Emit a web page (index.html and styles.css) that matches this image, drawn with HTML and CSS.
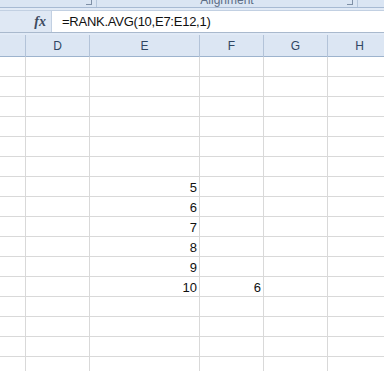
FILE: index.html
```html
<!DOCTYPE html>
<html>

<head>
    <title>RANK.AVG</title>
    <link rel="stylesheet" href="styles.css">
</head>

<body>
    <div class="ribbon">
        <div class="group group-left"><span class="launcher"></span></div>
        <div class="group group-mid"><span class="group-label">Alignment</span><span class="launcher"></span></div>
        <div class="group group-right"></div>
    </div>
    <div class="band"></div>

    <div class="fbar">
        <div class="fx-area"><span class="fx">fx</span></div>
        <div class="formula">=RANK.AVG(10,E7:E12,1)</div>
    </div>
    <div class="band"></div>

    <div class="sheet">
        <div class="cols">
            <div class="ch"></div>
            <div class="ch">D</div>
            <div class="ch">E</div>
            <div class="ch">F</div>
            <div class="ch">G</div>
            <div class="ch">H</div>
        </div>

        <div class="row"><div></div><div></div><div></div><div></div><div></div><div></div></div>
        <div class="row"><div></div><div></div><div></div><div></div><div></div><div></div></div>
        <div class="row"><div></div><div></div><div></div><div></div><div></div><div></div></div>
        <div class="row"><div></div><div></div><div></div><div></div><div></div><div></div></div>
        <div class="row"><div></div><div></div><div></div><div></div><div></div><div></div></div>
        <div class="row"><div></div><div></div><div></div><div></div><div></div><div></div></div>
        <div class="row"><div></div><div></div><div>5</div><div></div><div></div><div></div></div>
        <div class="row"><div></div><div></div><div>6</div><div></div><div></div><div></div></div>
        <div class="row"><div></div><div></div><div>7</div><div></div><div></div><div></div></div>
        <div class="row"><div></div><div></div><div>8</div><div></div><div></div><div></div></div>
        <div class="row"><div></div><div></div><div>9</div><div></div><div></div><div></div></div>
        <div class="row"><div></div><div></div><div>10</div><div>6</div><div></div><div></div></div>
        <div class="row"><div></div><div></div><div></div><div></div><div></div><div></div></div>
        <div class="row"><div></div><div></div><div></div><div></div><div></div><div></div></div>
        <div class="row"><div></div><div></div><div></div><div></div><div></div><div></div></div>
        <div class="row"><div></div><div></div><div></div><div></div><div></div><div></div></div>
    </div>
</body>

</html>
```

FILE: styles.css
```css
body {
    margin: 0;
    background-color: #fff;
    font-family: "Liberation Sans", Arial, sans-serif;
    overflow: hidden;
    width: 384px;
    height: 371px;
}

/* ribbon strip, cut off at the top */
.ribbon {
    display: flex;
    height: 7px;
    background-color: #dae5f3;
    border-bottom: 1px solid #a7bad3;
    overflow: hidden;
}

.group {
    position: relative;
    height: 7px;
}

.group-left {
    width: 96px;
    border-right: 1px solid #b6c7dc;
}

.group-mid {
    width: 260px;
    border-right: 1px solid #b6c7dc;
    text-align: center;
}

.group-right {
    flex: 1;
}

.group-label {
    display: block;
    font-size: 12px;
    line-height: 12px;
    margin-top: -6px;
    color: #5d6e86;
}

.launcher {
    position: absolute;
    right: 4px;
    top: 0;
    width: 5px;
    height: 4px;
    border-right: 1px solid #7f90a6;
    border-bottom: 1px solid #7f90a6;
}

.band {
    height: 2px;
    background-color: #e1eaf6;
}

/* formula bar */
.fbar {
    display: flex;
    height: 21px;
    border-top: 1px solid #c2d0e2;
    border-bottom: 1px solid #a9b9cd;
    background-color: #dfe8f4;
}

.fx-area {
    width: 51px;
    border-right: 1px solid #c2d0e2;
    text-align: right;
}

.fx {
    display: inline-block;
    margin-right: 5px;
    font-family: "Liberation Serif", "Times New Roman", serif;
    font-style: italic;
    font-weight: bold;
    font-size: 14px;
    line-height: 21px;
    color: #3c4a60;
}

.formula {
    flex: 1;
    background-color: #fff;
    padding-left: 10px;
    font-size: 13px;
    letter-spacing: -0.25px;
    line-height: 21px;
    color: #111;
}

/* grid */
.cols,
.row {
    display: grid;
    grid-template-columns: 26px 64px 110px 64px 64px 64px;
}

.cols {
    height: 21px;
    background-color: #dce6f3;
    border-bottom: 1px solid #9db3cd;
}

.ch {
    border-right: 1px solid #b3c3d8;
    text-align: center;
    font-size: 12px;
    line-height: 22px;
    color: #2f4663;
}

.row {
    height: 19px;
    border-bottom: 1px solid #d9d9d9;
}

.row div {
    border-right: 1px solid #d9d9d9;
    text-align: right;
    padding-right: 2px;
    font-size: 13px;
    line-height: 21px;
    color: #111;
}
```
